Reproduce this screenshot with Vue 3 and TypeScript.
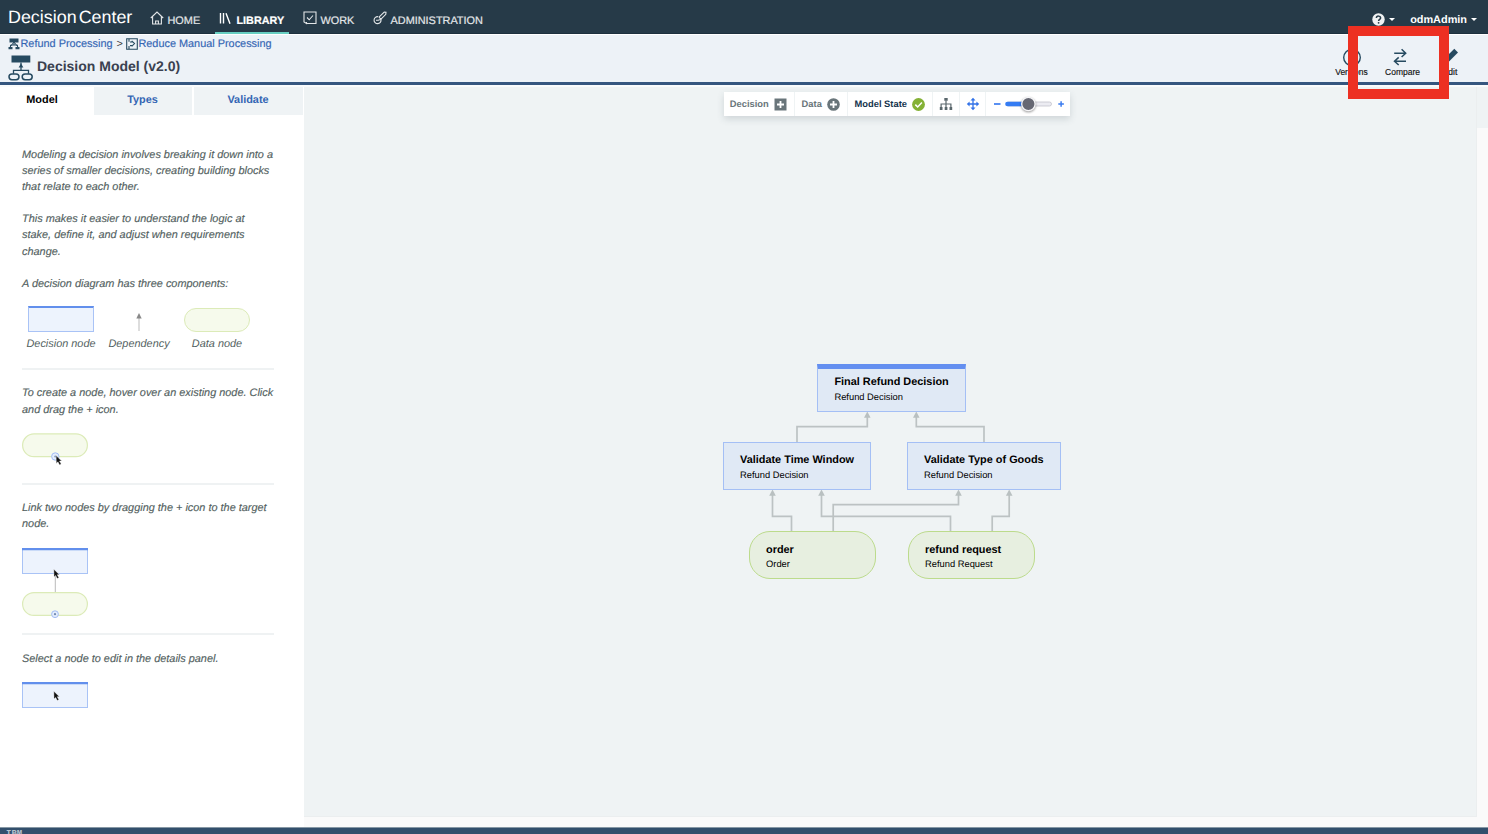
<script setup lang="ts">
interface DiagramNode {
  id: string
  title: string
  type: string
  kind: 'decision' | 'data'
  root?: boolean
  x: number
  y: number
  w: number
  h: number
}

const nodes: DiagramNode[] = [
  { id: 'final', title: 'Final Refund Decision', type: 'Refund Decision', kind: 'decision', root: true, x: 817.4, y: 364, w: 148.6, h: 48 },
  { id: 'window', title: 'Validate Time Window', type: 'Refund Decision', kind: 'decision', x: 723, y: 442, w: 148, h: 48 },
  { id: 'goods', title: 'Validate Type of Goods', type: 'Refund Decision', kind: 'decision', x: 907, y: 442, w: 154, h: 48 },
  { id: 'order', title: 'order', type: 'Order', kind: 'data', x: 749, y: 531, w: 127, h: 48 },
  { id: 'request', title: 'refund request', type: 'Refund Request', kind: 'data', x: 908, y: 531, w: 127, h: 48 },
]

const links: string[] = [
  'M797 442V426.7H867.3V417',
  'M984 442V426.7H916.3V417',
  'M791.5 531V516.3H772.5V495',
  'M833.2 531V504.7H958.5V495',
  'M950.5 531V516.3H821.5V495',
  'M992.2 531V516.3H1009.2V495',
]

const arrowTips: [number, number][] = [
  [867.3, 411.5], [916.3, 411.5], [772.5, 489.5], [958.5, 489.5], [821.5, 489.5], [1009.2, 489.5],
]
</script>

<template>
  <div class="app">
    <header class="topbar">
      <div class="brand"><span>Decision</span><span>Center</span></div>
      <nav class="nav">
        <a class="nav-item home">
          <svg width="14" height="14" viewBox="0 0 14 14"><path d="M.8 7 7 1l6.200 6M2.600 5.600v7.400h8.800V5.600M5.600 13v-3h2.800v3" /></svg>
          <span>HOME</span>
        </a>
        <a class="nav-item library active">
          <svg width="13" height="13" viewBox="0 0 13 13"><path d="M1.500 1v10.500M4.500 1v10.500M7 1.200l4 10.500" /></svg>
          <span>LIBRARY</span>
        </a>
        <a class="nav-item work">
          <svg width="14" height="14" viewBox="0 0 14 14"><path d="M3.500 12.500H13V1H1v10l2.500 1.500V11M4 6.500l2.200 2.300L10 4.500" /></svg>
          <span>WORK</span>
        </a>
        <a class="nav-item admin">
          <svg width="14" height="14" viewBox="0 0 14 14"><path d="M6 6.200 11.200 1l1.800.300-.200 2L8 8.200M8 8.500a3.500 3.500 0 1 1-2.800-2.800M3 9.200h2.300L8 8.200 5.900 6.100" /></svg>
          <span>ADMINISTRATION</span>
        </a>
      </nav>
      <div class="user">
        <svg width="13" height="13" viewBox="0 0 13 13"><circle cx="6.500" cy="6.500" r="6.200" fill="#f0f2f3" /><path d="M4.400 5c.1-2.600 4.300-2.400 4.200 0 0 1.400-2 1.400-2 3" fill="none" stroke="#263a48" stroke-width="1.500" /><circle cx="6.600" cy="9.800" r=".9" fill="#263a48" /></svg>
        <i class="caret first"></i>
        <span>odmAdmin</span>
        <i class="caret"></i>
      </div>
    </header>

    <section class="titlebar">
      <div class="heading">
        <div class="crumbs">
          <svg class="crumb-icon" width="12" height="12" viewBox="0 0 12 12"><path d="M1.500.5h9v4h-9z" fill="#264a60" /><path d="M6 4v3M2.500 9V7h7v2M6 4l-4 5M6 4l4 5" fill="none" stroke="#264a60" /><path d="M.5 9h4v2.200h-4zM7.500 9h4v2.200h-4z" fill="#264a60" /></svg>
          <a>Refund Processing</a>
          <span class="sep">&gt;</span>
          <svg class="crumb-icon" width="12" height="12" viewBox="0 0 12 12"><path d="M.7.700h10.600v10.600H.7zM3 .7v3M3 8v3.300M4 4h2.500M4 7.600h2M5.700 2.800l2.800 2.800-2.800 2.800" fill="none" stroke="#264a60" stroke-width="1.100" /></svg>
          <a>Reduce Manual Processing</a>
        </div>
        <h1>
          <svg width="26" height="26" viewBox="0 0 26 26"><path d="M3.500.5h18.800V7.500H3.500z" fill="#264a60" /><path d="M13 7.500v7.800M5.500 18.800v-3.500h15v3.500" fill="none" stroke="#264a60" stroke-width="1.300" /><path d="m13 8.500 2.400 4h-4.800z" fill="#264a60" /><rect x="1" y="18.900" width="10" height="5.800" rx="2.900" fill="none" stroke="#264a60" stroke-width="1.500" /><rect x="14.200" y="18.900" width="10" height="5.800" rx="2.900" fill="none" stroke="#264a60" stroke-width="1.500" /></svg>
          <span>Decision Model (v2.0)</span>
        </h1>
      </div>
      <div class="actions">
        <button class="action versions">
          <svg width="20" height="20" viewBox="0 0 20 20"><circle cx="10" cy="10.500" r="8.300" fill="none" stroke="#264a60" stroke-width="1.400" /><path d="M10 5.500v5l3.500 2" fill="none" stroke="#264a60" stroke-width="1.400" /></svg>
          <span>Versions</span>
        </button>
        <button class="action compare">
          <svg width="20" height="20" viewBox="0 0 20 20"><path d="M1.200 6.200h11.300M8.600 2.300l4.100 3.900-4.100 3.800M13 14.200H1.800M5.700 10.400l-4.200 3.800L5.700 18" fill="none" stroke="#264a60" stroke-width="1.500" /></svg>
          <span>Compare</span>
        </button>
        <button class="action edit">
          <svg width="20" height="20" viewBox="0 0 20 20"><path d="M2 14 14.300 1.700l3.700 3.700L6.300 17.200 1 18z" fill="#264a60" /></svg>
          <span>Edit</span>
        </button>
      </div>
      <div class="highlight"></div>
    </section>

    <main class="body">
      <aside class="side">
        <div class="tabs">
          <div class="tab t1 on">Model</div>
          <div class="tab t2">Types</div>
          <div class="tab t3">Validate</div>
        </div>
        <div class="help">
          <p>Modeling a decision involves breaking it down into a<br />series of smaller decisions, creating building blocks<br />that relate to each other.</p>
          <p>This makes it easier to understand the logic at<br />stake, define it, and adjust when requirements<br />change.</p>
          <p>A decision diagram has three components:</p>
          <div class="legend">
            <figure><div class="decision-shape"></div><figcaption>Decision node</figcaption></figure>
            <figure><svg width="10" height="26" viewBox="0 0 10 26"><path d="M5 11v14" stroke="#bbb" /><path d="m5 7 2.700 5.500H2.300z" fill="#888" /></svg><figcaption>Dependency</figcaption></figure>
            <figure><div class="data-shape"></div><figcaption>Data node</figcaption></figure>
          </div>
          <hr />
          <p class="create">To create a node, hover over an existing node. Click<br />and drag the + icon.</p>
          <svg class="demo" width="70" height="36" viewBox="0 0 70 36">
            <rect x=".6" y=".900" width="64.800" height="22.800" rx="11.400" fill="#f6faec" stroke="#dcebb8" stroke-width="1.200" />
            <circle cx="33.300" cy="23.500" r="3.700" fill="#e3edfd" stroke="#a3bdf5" /><circle cx="33.300" cy="23.500" r="1" fill="#7188ae" />
            <path class="pointer" d="m34.100 22.600.2 7.800 1.600-1.600 1.700 3.200 1.600-.9-1.700-3h2.200z" />
          </svg>
          <hr />
          <p class="link">Link two nodes by dragging the + icon to the target<br />node.</p>
          <svg class="demo" width="70" height="72" viewBox="0 0 70 72">
            <path d="M33.300 24v20" stroke="#bbb" />
            <rect x=".5" y=".9" width="65" height="24.600" fill="#edf3fd" stroke="#a9c3f6" /><path d="M0 1.200h66" stroke="#628fec" stroke-width="2.200" />
            <rect x=".6" y="44.600" width="64.800" height="22.800" rx="11.400" fill="#f6faec" stroke="#dcebb8" stroke-width="1.200" />
            <circle cx="33" cy="66.200" r="3.400" fill="#e3edfd" stroke="#a3bdf5" /><circle cx="33" cy="66.200" r="1.100" fill="#7188ae" />
            <path class="pointer" d="m31.800 21.200.2 7.800 1.600-1.600 1.700 3.200 1.600-.9-1.700-3h2.200z" />
          </svg>
          <hr />
          <p class="select">Select a node to edit in the details panel.</p>
          <svg class="demo" width="70" height="28" viewBox="0 0 70 28">
            <rect x=".5" y=".9" width="65" height="24.600" fill="#edf3fd" stroke="#a9c3f6" /><path d="M0 1.200h66" stroke="#628fec" stroke-width="2.200" />
            <path class="pointer" d="m31.800 9.200.2 7.800 1.600-1.600 1.700 3.200 1.600-.9-1.700-3h2.200z" />
          </svg>
        </div>
      </aside>

      <section class="workspace">
        <div class="canvas"></div>
      </section>
    </main>

    <div class="toolbar">
      <div class="tool c1"><span>Decision</span>
        <svg width="13" height="13" viewBox="0 0 13 13"><path d="M.5.500h12v12H.5z" fill="#69757a" /><path d="M6.500 3v7M3 6.500h7" stroke="#fff" stroke-width="1.800" /></svg>
      </div>
      <div class="tool c2"><span>Data</span>
        <svg width="13" height="13" viewBox="0 0 13 13"><circle cx="6.500" cy="6.500" r="6.300" fill="#69757a" /><path d="M6.500 3v7M3 6.500h7" stroke="#fff" stroke-width="1.800" /></svg>
      </div>
      <div class="tool c3"><span>Model State</span>
        <svg width="13" height="13" viewBox="0 0 13 13"><circle cx="6.500" cy="6.500" r="6.400" fill="#84b135" /><path d="m3.300 6.600 2.400 2.400 4.200-4.400" fill="none" stroke="#fff" stroke-width="1.500" /></svg>
      </div>
      <div class="tool c4">
        <svg width="14" height="14" viewBox="0 0 14 14"><path d="M7 3.500V10M2.100 10.500V7h9.800v3.500" fill="none" stroke="#5a676c" stroke-width="1.200" /><path d="M5.300 1h3.400v2.800H5.300zM.8 10h2.700v3H.8zM5.700 10h2.700v3H5.700zM10.500 10h2.700v3h-2.700z" fill="#5a676c" /></svg>
      </div>
      <div class="tool c5">
        <svg width="14" height="14" viewBox="0 0 14 14"><path d="M7 2v10M2 7h10" stroke="#3272e8" stroke-width="1.300" /><path d="m7 .8 2.500 2.800h-5zM7 13.200l2.500-2.800h-5zM.8 7l2.800-2.500v5zM13.200 7l-2.800-2.500v5z" fill="#3272e8" /></svg>
      </div>
      <div class="tool c6">
        <svg width="76" height="20" viewBox="0 0 76 20"><path d="M2 10h6.500" stroke="#3d7df0" stroke-width="1.700" /><rect x="14.500" y="8" width="45" height="4" rx="2" fill="#ececf2" stroke="#c3c3cc" stroke-width=".8" /><path d="M15.500 10H36" stroke="#357cf3" stroke-width="4.600" stroke-linecap="round" /><circle class="knob" cx="36.400" cy="10" r="6.700" fill="#666873" stroke="#f6f6f8" stroke-width="1.300" /><path d="M66.300 10h5.600M69.100 7.200v5.600" stroke="#3d7df0" stroke-width="1.500" /></svg>
      </div>
    </div>

    <div class="diagram">
      <svg class="links" width="1488" height="834" viewBox="0 0 1488 834">
        <path v-for="d in links" :key="d" :d="d" fill="none" stroke="#bcc2c3" stroke-width="1.700" />
        <path v-for="t in arrowTips" :key="t.join()" :d="`M${t[0]} ${t[1]}l3.300 6.200h-6.600z`" fill="#b9c0c1" />
      </svg>
      <div
        v-for="n in nodes"
        :key="n.id"
        class="node"
        :class="[n.kind, { root: n.root }]"
        :style="{ left: n.x + 'px', top: n.y + 'px', width: n.w + 'px', height: n.h + 'px' }"
      >
        <strong>{{ n.title }}</strong>
        <span>{{ n.type }}</span>
      </div>
    </div>

    <footer class="footer"><span>IBM</span></footer>
  </div>
</template>

<style>
body {
  overflow: hidden;
}
</style>

<style scoped>
* {
  box-sizing: border-box;
}
.app {
  position: relative;
  display: flex;
  flex-direction: column;
  width: 1488px;
  height: 834px;
  overflow: hidden;
  background: #fafafa;
  font-family: "Liberation Sans", Arial, sans-serif;
  font-size: 10.9px;
  text-rendering: geometricPrecision;
}
svg {
  display: block;
  flex: none;
}
.topbar {
  display: flex;
  flex: none;
  height: 34px;
  background: #263a48;
  border-bottom: 1px solid #1d303e;
  color: #e3e6e8;
}
.brand {
  display: flex;
  gap: 2px;
  width: 142px;
  padding: 7px 0 0 8px;
  font-size: 17.9px;
  line-height: 21px;
  color: #fff;
}
.nav {
  display: flex;
}
.nav-item {
  display: flex;
  align-items: flex-start;
  height: 34px;
  padding-top: 13px;
  line-height: 16px;
}
.nav-item span {
  -webkit-text-stroke: 0.2px currentColor;
}
.nav-item svg {
  margin-top: -2px;
  fill: none;
  stroke: currentColor;
  stroke-width: 1.1;
}
.home {
  width: 73px;
  padding-left: 8px;
  gap: 3.500px;
}
.library {
  width: 74px;
  padding-left: 4px;
  gap: 4.500px;
}
.nav-item.library svg {
  margin-top: -1px;
  stroke-width: 1.4;
}
.library.active {
  color: #fff;
  font-weight: 700;
  font-size: 10.8px;
  border-bottom: 2px solid #68cfc2;
}
.work {
  width: 72px;
  margin-left: 14px;
  gap: 3.500px;
}
.admin {
  margin-left: -2px;
  gap: 3.500px;
  font-size: 10.900px;
}
.user {
  display: flex;
  flex: none;
  align-items: center;
  margin-left: auto;
  padding: 6px 11px 0 0;
  font-weight: 700;
  color: #fff;
}
.user span {
  padding-top: 1px;
}
.caret {
  width: 0;
  height: 0;
  border: 3px solid transparent;
  border-top: 3px solid #fff;
  border-bottom: 0;
}
.caret.first {
  margin: 0 15px 0 4px;
}
.caret:last-child {
  margin-left: 4px;
}
.titlebar {
  position: relative;
  display: flex;
  flex: none;
  justify-content: space-between;
  height: 51px;
  background: #edf2f7;
  border-top: 1px solid #fff;
  border-bottom: 3px solid #35567f;
}
.crumbs {
  display: flex;
  align-items: center;
  height: 17px;
  padding-left: 8px;
  color: #3466b4;
}
.crumbs a {
  -webkit-text-stroke: 0.15px currentColor;
}
.crumb-icon {
  margin-right: 0.500px;
}
.crumbs .sep {
  margin: 0 3px 0 4px;
  color: #333;
}
h1 {
  display: flex;
  align-items: center;
  gap: 3px;
  height: 27px;
  margin: 2px 0 0 8px;
  font-size: 14px;
  color: #3a4150;
}
h1 span {
  margin-bottom: 3px;
}
.actions {
  display: flex;
  padding: 12px 17px 0 0;
}
.action {
  display: flex;
  flex-direction: column;
  align-items: center;
  height: 32px;
  padding: 0;
  border: 0;
  background: none;
  font: 8.500px/10px "Liberation Sans", Arial, sans-serif;
  color: #111;
}
.action span {
  -webkit-text-stroke: 0.15px currentColor;
}
.versions {
  width: 49px;
}
.compare {
  width: 53px;
}
.edit {
  width: 42px;
}
.highlight {
  position: absolute;
  left: 1348px;
  top: -9px;
  z-index: 5;
  width: 101px;
  height: 73px;
  border: 10px solid #ed3022;
}
.body {
  display: flex;
  flex: 1;
  min-height: 0;
  border-top: 2px solid #f9fbfc;
}
.side {
  flex: none;
  width: 304px;
  background: #fff;
}
.tabs {
  display: flex;
  gap: 2px;
  height: 28px;
  font-weight: 700;
  line-height: 27px;
  text-align: center;
  color: #3466b4;
}
.tab {
  background: #eff3f5;
}
.t1 {
  width: 92px;
  padding-right: 8px;
}
.t2 {
  width: 98px;
  padding-right: 1px;
}
.t3 {
  width: 109px;
  padding-right: 1px;
}
.tab.on {
  background: #fff;
  color: #000;
}
.help {
  padding: 31.500px 30px 0 22px;
  font-size: 10.920px;
  font-style: italic;
  line-height: 16.300px;
  color: #535f61;
}
.help p {
  margin: 0 0 15.700px;
  white-space: nowrap;
  -webkit-text-stroke: 0.15px currentColor;
}
.legend {
  display: flex;
  height: 62px;
  margin-top: -1.700px;
}
.legend figure {
  display: flex;
  flex-direction: column;
  align-items: center;
  gap: 4px;
  width: 78px;
  margin: 0;
  white-space: nowrap;
}
.decision-shape {
  width: 66px;
  height: 26px;
  background: #edf3fd;
  border: 1px solid #a9c3f6;
  border-top: 2px solid #628fec;
}
.data-shape {
  width: 66px;
  height: 24px;
  margin-top: 2px;
  background: #f6faec;
  border: 1px solid #dcebb8;
  border-radius: 12px;
}
hr {
  width: 252px;
  height: 2px;
  margin: 0;
  border: 0;
  background: #eff2f3;
}
.help .create,
.help .link,
.help .select {
  padding-top: 15.300px;
  margin-bottom: 15.200px;
}
.pointer {
  fill: #111;
  stroke: #fff;
  stroke-width: 0.4;
}
.create + .demo {
  margin-bottom: 13.500px;
}
.link + .demo {
  margin-bottom: 13.700px;
}
.workspace {
  flex: 1;
  padding: 0 11px 10px 0;
  background: linear-gradient(#eff3f4 0 41px, #fafafa 41px);
}
.canvas {
  height: 100%;
  background: #eff3f4;
  border: solid #ebeeef;
  border-width: 0 1px 1px 0;
}
.toolbar {
  position: absolute;
  left: 724px;
  top: 92px;
  display: flex;
  width: 346px;
  height: 24px;
  background: #fff;
  box-shadow: 0 3px 7px rgba(60, 80, 90, 0.18);
  font-size: 9.350px;
  font-weight: 700;
  color: #69757a;
}
.tool {
  display: flex;
  align-items: center;
  justify-content: center;
  gap: 5.500px;
  border-right: 1.500px solid #eff3f4;
}
.c1 {
  width: 71px;
  padding-right: 1px;
}
.c2 {
  width: 53px;
}
.c3 {
  width: 85px;
  color: #15344d;
}
.c4 {
  width: 27px;
}
.c5 {
  width: 26px;
}
.c6 {
  width: 84px;
  padding-left: 3px;
  border: 0;
}
.knob {
  filter: drop-shadow(0 1px 1px rgba(0, 0, 0, 0.4));
}
.diagram {
  position: absolute;
  inset: 0;
  pointer-events: none;
}
.node {
  position: absolute;
  display: flex;
  flex-direction: column;
  padding: 10px 0 0 16px;
  white-space: nowrap;
  color: #000;
}
.node strong {
  font-size: 10.900px;
  line-height: 15px;
}
.node span {
  font-size: 9.350px;
  line-height: 14px;
}
.node.decision {
  background: #e0e9f5;
  border: 1px solid #a4bff5;
}
.node.root {
  padding-top: 6px;
  border-top: 5px solid #648ff0;
}
.node.data {
  padding-top: 11px;
  background: #e7efe0;
  border: 1.500px solid #bcdb8c;
  border-radius: 21px;
}
.node.data span {
  margin-top: -1px;
}
.footer {
  flex: none;
  height: 7px;
  overflow: hidden;
  background: #324f6c;
  border-top: 1px solid #8798a5;
}
.footer span {
  display: block;
  padding: 1px 0 0 6px;
  font: 700 9px/10px "Liberation Mono", monospace;
  color: #b4c1cc;
}
</style>
